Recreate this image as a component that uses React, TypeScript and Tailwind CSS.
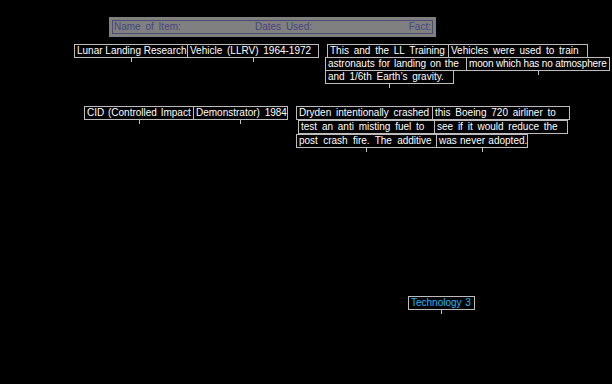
import React from "react";

interface INode {
    x: number;
    y: number;
    w: number;
    text: string;
    color?: string;
    fit?: string;
}

// word-spacing tweaks so the line fills its box like the bitmap font does
const loose = "[word-spacing:2px]";
const tight = "tracking-[-0.15px]";

const nodes: INode[] = [
    { x: 74, y: 44, w: 114, text: "Lunar Landing Research" },
    { x: 187, y: 44, w: 132, text: "Vehicle (LLRV) 1964-1972", fit: loose },

    { x: 327, y: 44, w: 122, text: "This and the LL Training", fit: loose },
    { x: 448, y: 44, w: 140, text: "Vehicles were used to train", fit: loose },
    { x: 325, y: 57, w: 142, text: "astronauts for landing on the", fit: "[word-spacing:1px]" },
    { x: 466, y: 57, w: 144, text: "moon which has no atmosphere", fit: tight },
    { x: 325, y: 70, w: 129, text: "and 1/6th Earth\u2019s gravity.", fit: loose },

    { x: 84, y: 106, w: 110, text: "CID (Controlled Impact", fit: "[word-spacing:1px]" },
    { x: 193, y: 106, w: 95, text: "Demonstrator) 1984", fit: loose },

    { x: 296, y: 106, w: 137, text: "Dryden intentionally crashed", fit: loose },
    { x: 432, y: 106, w: 138, text: "this Boeing 720 airliner to", fit: loose },
    { x: 298, y: 120, w: 137, text: "test an anti misting fuel to", fit: loose },
    { x: 434, y: 120, w: 134, text: "see if it would reduce the", fit: loose },
    { x: 296, y: 134, w: 141, text: "post crash fire. The additive", fit: "[word-spacing:2.5px]" },
    { x: 436, y: 134, w: 92, text: "was never adopted.", fit: "[word-spacing:0.5px]" },

    { x: 408, y: 296, w: 67, text: "Technology 3", color: "text-[#1cb8ff]", fit: "[word-spacing:1px]" },
];

const Node = ({ node }: { node: INode }) => {
    return (
        <div
            className="absolute"
            style={{ left: node.x, top: node.y, width: node.w }}
        >
            <div className="h-[14px] border border-[#bdbdbd] bg-black pl-[2px] whitespace-nowrap overflow-hidden">
                <span className={`block text-[10px] leading-[12px] ${node.color ?? "text-white"} ${node.fit ?? ""}`}>
                    {node.text}
                </span>
            </div>
            <div className="mx-auto w-px h-[4px] bg-[#bdbdbd]" />
        </div>
    );
};

export default function App() {
    return (
        <div
            className="relative w-[612px] h-[384px] bg-black overflow-hidden"
            style={{ fontFamily: '"Liberation Sans", Arial, sans-serif' }}
        >
            {/* header bar */}
            <div className="absolute left-[109px] top-[17px] w-[327px] h-[20px] bg-[#808080] p-[3px]">
                <div className="flex h-full items-center border border-[#4c4c70] px-[1px] text-[10px] leading-[12px] text-[#46467e] [word-spacing:2px]">
                    <span className="w-[141px]">Name of Item:</span>
                    <span className="flex-1">Dates Used:</span>
                    <span>Fact:</span>
                </div>
            </div>

            {nodes.map((node, i) => (
                <Node key={i} node={node} />
            ))}
        </div>
    );
}
